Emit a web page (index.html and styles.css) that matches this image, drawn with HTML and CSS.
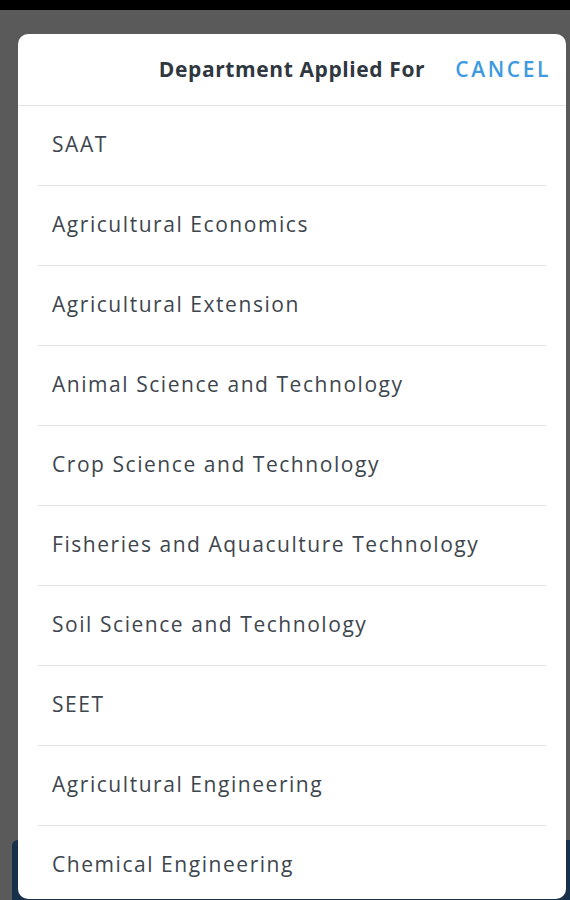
FILE: index.html
```html
<!DOCTYPE html>
<html>
<head>
<meta charset="utf-8">
<link rel="stylesheet" href="styles.css">
</head>
<body>
<div class="screen">
  <div class="statusbar"></div>
  <div class="backdrop">
    <div class="bg-button"></div>
  </div>
  <div class="dialog">
    <div class="dialog-header">
      <div class="dialog-title">Department Applied For</div>
      <div class="dialog-cancel">CANCEL</div>
    </div>
    <ul class="options">
      <li class="option">SAAT</li>
      <li class="option">Agricultural Economics</li>
      <li class="option">Agricultural Extension</li>
      <li class="option">Animal Science and Technology</li>
      <li class="option">Crop Science and Technology</li>
      <li class="option">Fisheries and Aquaculture Technology</li>
      <li class="option">Soil Science and Technology</li>
      <li class="option">SEET</li>
      <li class="option">Agricultural Engineering</li>
      <li class="option">Chemical Engineering</li>
    </ul>
  </div>
</div>
</body>
</html>
```
FILE: styles.css
```css
html, body {
  margin: 0;
  padding: 0;
  background: #5a5a5a;
}
.screen {
  position: relative;
  width: 570px;
  height: 900px;
  overflow: hidden;
  background: #5a5a5a;
  font-family: "Open Sans", "Liberation Sans", Arial, sans-serif;
}
.statusbar {
  height: 10px;
  background: #000;
}
.backdrop {
  height: 890px;
  display: flex;
  flex-direction: column;
  justify-content: flex-end;
  padding-left: 12px;
}
.bg-button {
  height: 60px;
  border-radius: 6px 0 0 0;
  background: #17314b;
}
.dialog {
  position: absolute;
  top: 34px;
  left: 18px;
  width: 548px;
  height: 865px;
  background: #fff;
  border-radius: 10px;
  overflow: hidden;
}
.dialog-header {
  position: relative;
  box-sizing: border-box;
  height: 72px;
  border-bottom: 1px solid #e4e4e4;
  display: flex;
  align-items: center;
  justify-content: center;
  padding-bottom: 2px;
}
.dialog-title {
  font-size: 21px;
  font-weight: bold;
  letter-spacing: 0.6px;
  color: #2f3740;
}
.dialog-cancel {
  position: absolute;
  right: 15px;
  top: 0;
  height: 69px;
  display: flex;
  align-items: center;
  font-size: 21px;
  font-weight: 600;
  letter-spacing: 2.6px;
  color: #3d9ae0;
}
.options {
  list-style: none;
  margin: 0;
  padding: 0 20px;
}
.option {
  box-sizing: border-box;
  height: 80px;
  border-bottom: 1px solid #e4e4e4;
  display: flex;
  align-items: center;
  padding-left: 14px;
  padding-bottom: 3px;
  font-size: 21px;
  letter-spacing: 1.55px;
  color: #3e464e;
}
```
